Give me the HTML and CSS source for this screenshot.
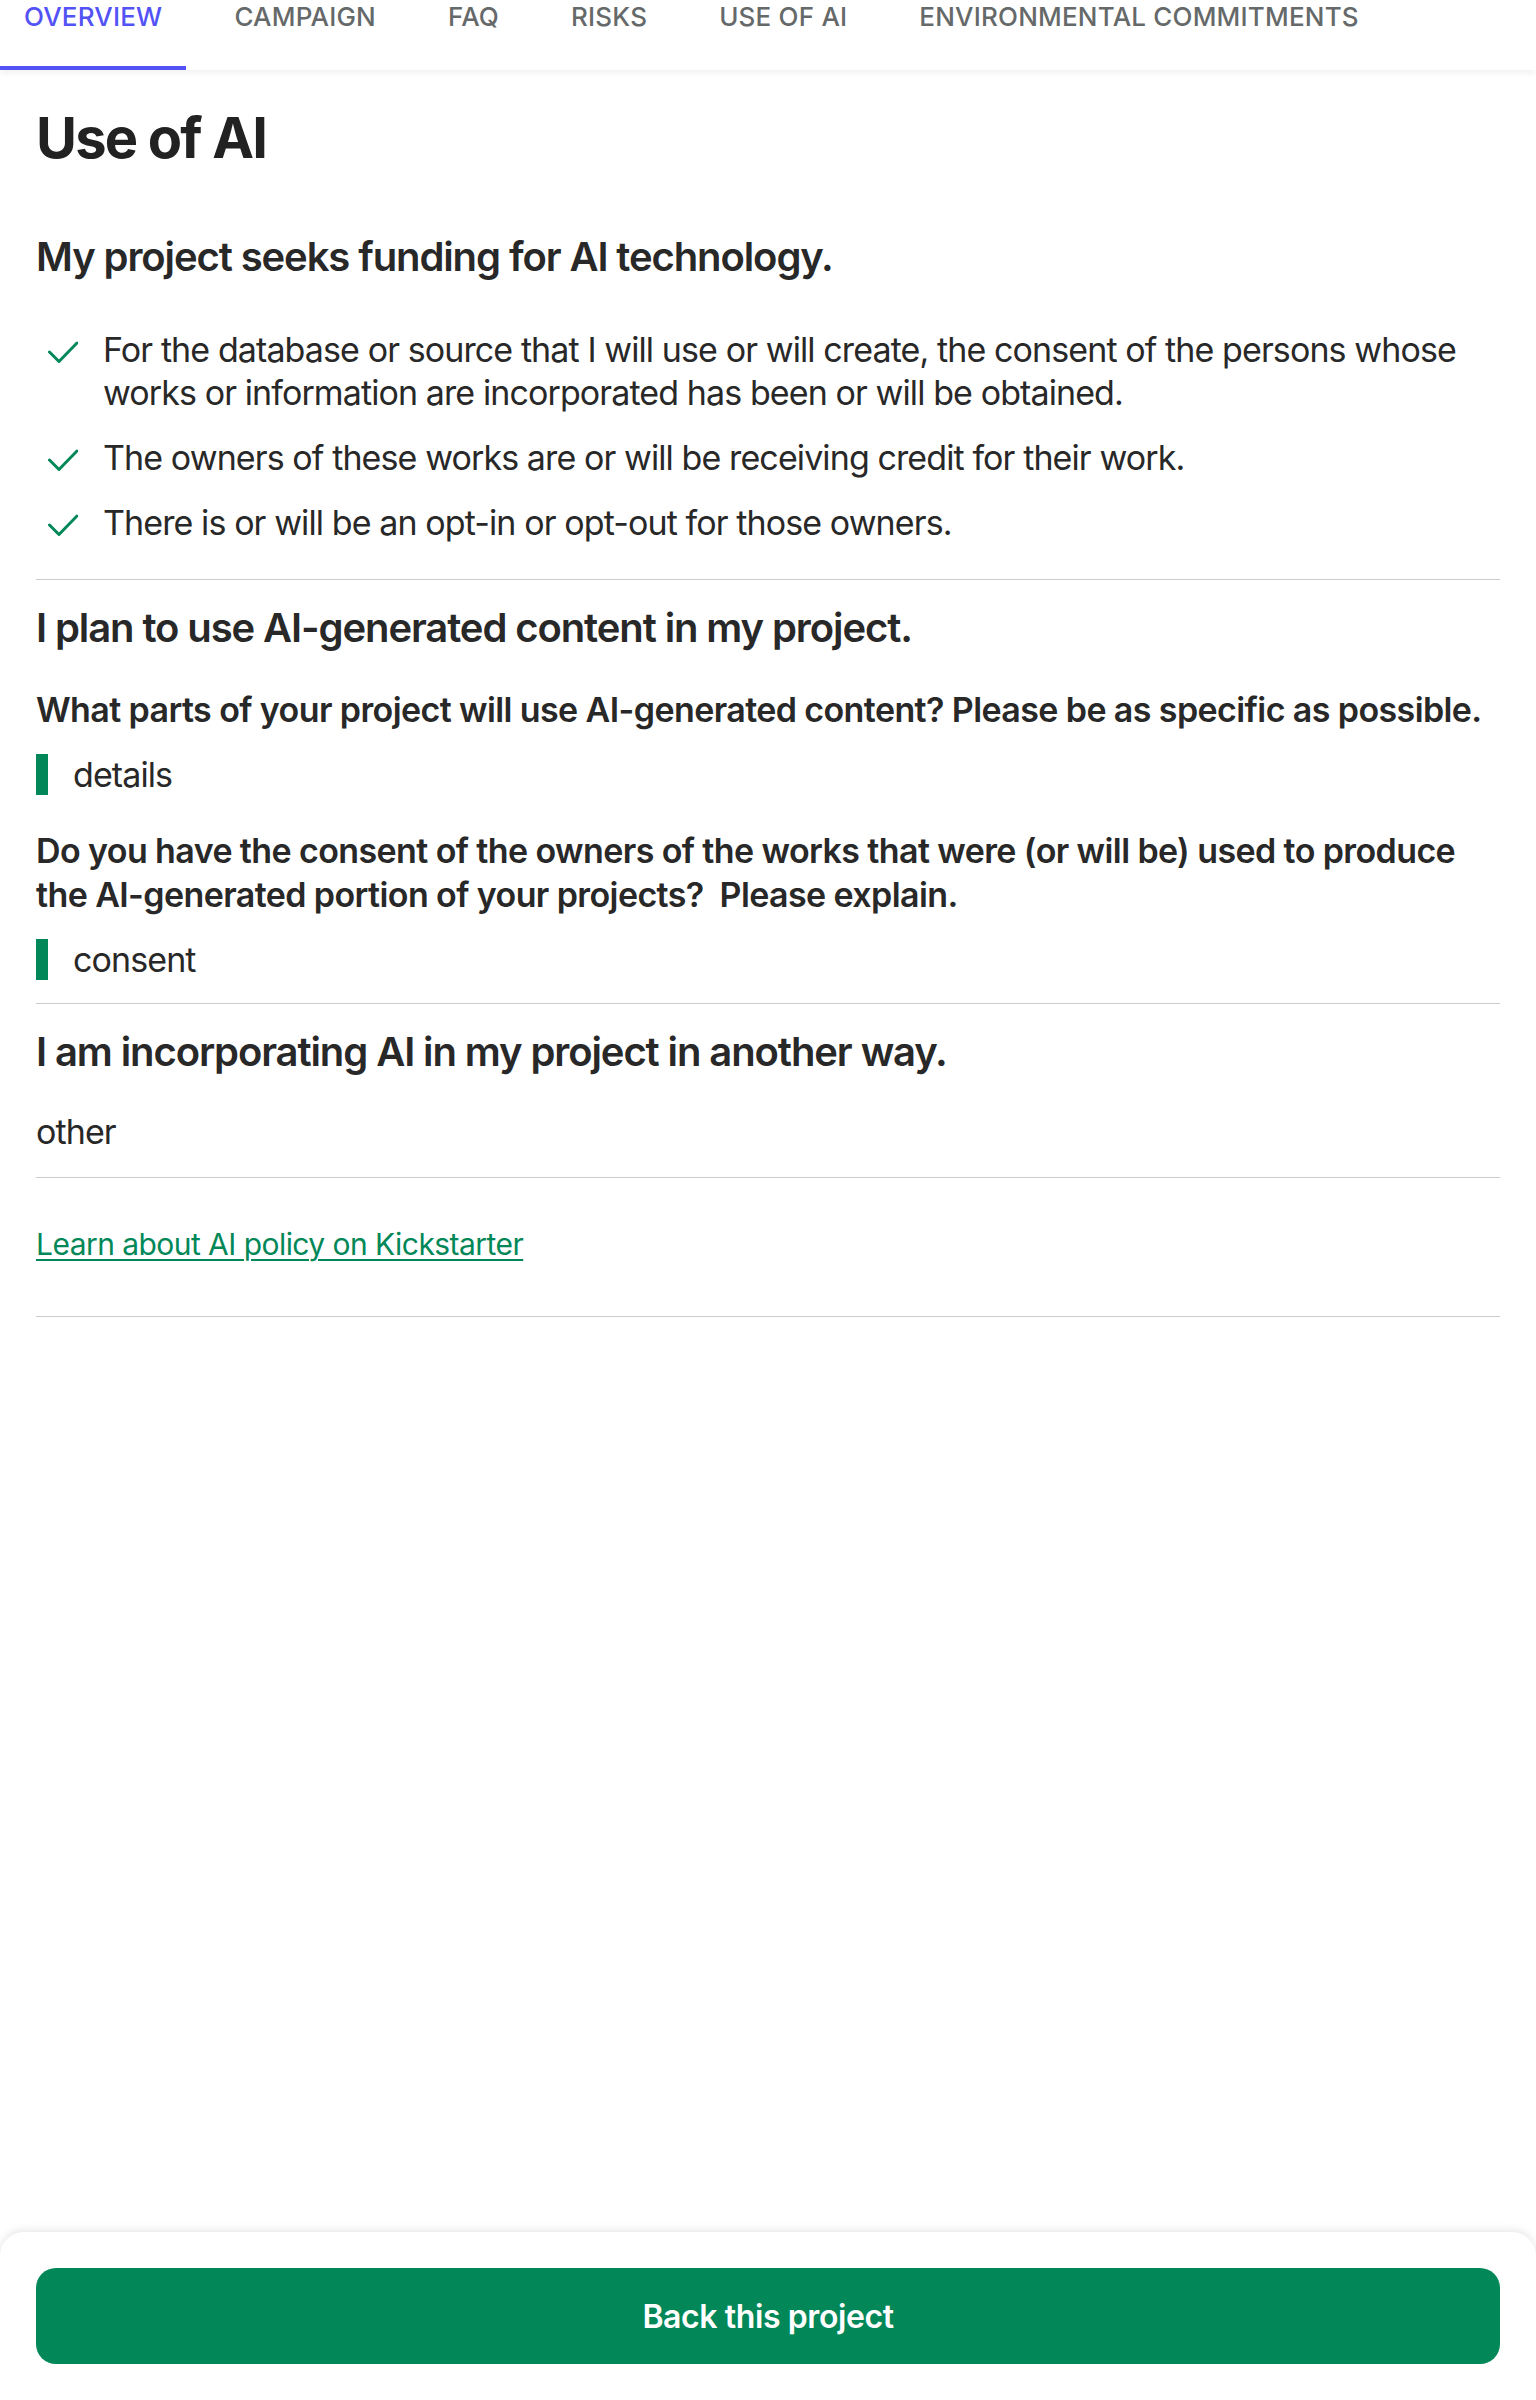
FILE: index.html
```html
<!DOCTYPE html>
<html lang="en">
<head>
<meta charset="utf-8">
<title>Use of AI</title>
<link rel="stylesheet" href="styles.css">
</head>
<body>
<nav class="tabs">
  <a class="tab active" href="#">OVERVIEW</a>
  <a class="tab" href="#">CAMPAIGN</a>
  <a class="tab" href="#">FAQ</a>
  <a class="tab" href="#">RISKS</a>
  <a class="tab" href="#">USE OF AI</a>
  <a class="tab" href="#">ENVIRONMENTAL COMMITMENTS</a>
</nav>
<main class="content">
  <h1 class="page-title">Use of AI</h1>
  <section class="ai-section first">
    <h2 class="ai-heading">My project seeks funding for AI technology.</h2>
    <ul class="checklist">
      <li class="check-item">
        <svg class="check-icon" width="30" height="22" viewBox="0 0 30 22" aria-hidden="true"><polyline points="1.5,11 11,20.5 29,2" fill="none" stroke="#028858" stroke-width="3" stroke-linecap="round" stroke-linejoin="round"/></svg>
        <span class="check-text">For the database or source that I will use or will create, the consent of the persons whose works or information are incorporated has been or will be obtained.</span>
      </li>
      <li class="check-item">
        <svg class="check-icon" width="30" height="22" viewBox="0 0 30 22" aria-hidden="true"><polyline points="1.5,11 11,20.5 29,2" fill="none" stroke="#028858" stroke-width="3" stroke-linecap="round" stroke-linejoin="round"/></svg>
        <span class="check-text">The owners of these works are or will be receiving credit for their work.</span>
      </li>
      <li class="check-item">
        <svg class="check-icon" width="30" height="22" viewBox="0 0 30 22" aria-hidden="true"><polyline points="1.5,11 11,20.5 29,2" fill="none" stroke="#028858" stroke-width="3" stroke-linecap="round" stroke-linejoin="round"/></svg>
        <span class="check-text">There is or will be an opt-in or opt-out for those owners.</span>
      </li>
    </ul>
  </section>
  <section class="ai-section">
    <h2 class="ai-heading">I plan to use AI-generated content in my project.</h2>
    <h3 class="question">What parts of your project will use AI-generated content? Please be as specific as possible.</h3>
    <p class="answer">details</p>
    <h3 class="question">Do you have the consent of the owners of the works that were (or will be) used to produce the AI-generated portion of your projects?&nbsp; Please explain.</h3>
    <p class="answer">consent</p>
  </section>
  <section class="ai-section">
    <h2 class="ai-heading">I am incorporating AI in my project in another way.</h2>
    <p class="plain-answer">other</p>
  </section>
  <div class="policy">
    <a class="policy-link" href="#">Learn about AI policy on Kickstarter</a>
  </div>
</main>
<footer class="back-bar">
  <button class="back-button" type="button">Back this project</button>
</footer>
</body>
</html>
```
FILE: styles.css
```css
* { box-sizing: border-box; }

html, body {
  margin: 0;
  padding: 0;
  background: #ffffff;
}

body {
  font-family: Inter, "Noto Sans", sans-serif;
  color: #282828;
  min-height: 100vh;
  display: flex;
  flex-direction: column;
}

/* Tabs */
.tabs {
  display: flex;
  gap: 24px;
  height: 70px;
  background: #fff;
  box-shadow: 0 3px 7px rgba(0, 0, 0, 0.06);
  position: relative;
  z-index: 1;
}

.tab {
  display: block;
  height: 70px;
  padding: 0 24px;
  line-height: 33px;
  font-size: 26px;
  font-weight: 500;
  letter-spacing: 0.2px;
  color: #656969;
  text-decoration: none;
  white-space: nowrap;
}

.tab.active {
  color: #5252f5;
  border-bottom: 4px solid #5252f5;
}

/* Content */
.content {
  padding: 0 36px;
}

.page-title {
  margin: 35px 0 0;
  font-size: 56px;
  line-height: 67px;
  font-weight: 700;
  letter-spacing: -1.8px;
  color: #222222;
}

.ai-section {
  border-top: 1px solid #cccccc;
  padding: 23px 0 23px;
}

.ai-section.first {
  border-top: none;
  padding-top: 60px;
  padding-bottom: 35px;
}

.ai-heading {
  margin: 0;
  font-size: 40px;
  line-height: 50px;
  font-weight: 600;
  letter-spacing: -1.1px;
  color: #282828;
}

.checklist {
  list-style: none;
  margin: 46px 0 0;
  padding: 0;
  display: flex;
  flex-direction: column;
  gap: 22px;
}

.check-item {
  display: flex;
  align-items: flex-start;
  font-size: 34px;
  line-height: 43px;
  letter-spacing: -0.9px;
}

.check-icon {
  flex: none;
  margin: 13px 25px 0 12px;
}

.question {
  margin: 35px 0 0;
  font-size: 34px;
  line-height: 44px;
  font-weight: 600;
  letter-spacing: -0.6px;
  color: #282828;
}

.answer + .question {
  margin-top: 34px;
}

.answer {
  margin: 22px 0 0;
  border-left: 12px solid #028858;
  padding-left: 25px;
  font-size: 34px;
  line-height: 41px;
  letter-spacing: -0.9px;
}

.plain-answer {
  margin: 33px 0 1px;
  font-size: 34px;
  line-height: 43px;
  letter-spacing: -0.9px;
}

.policy {
  border-top: 1px solid #cccccc;
  border-bottom: 1px solid #cccccc;
  padding: 44px 0 45px;
  line-height: 44px;
}

.policy-link {
  font-size: 30px;
  color: #028858;
  letter-spacing: -0.55px;
  text-decoration: underline;
  text-underline-offset: 4px;
  text-decoration-thickness: 2px;
}

/* Bottom bar */
.back-bar {
  margin-top: auto;
  background: #fff;
  border-radius: 24px 24px 0 0;
  box-shadow: 0 -2px 8px rgba(0, 0, 0, 0.10);
  padding: 36px 36px 36px;
}

.back-button {
  display: block;
  width: 100%;
  height: 96px;
  border: none;
  border-radius: 20px;
  background: #028858;
  color: #ffffff;
  font-family: Inter, "Noto Sans", sans-serif;
  font-size: 32px;
  font-weight: 600;
  letter-spacing: -0.4px;
  cursor: pointer;
}
```
